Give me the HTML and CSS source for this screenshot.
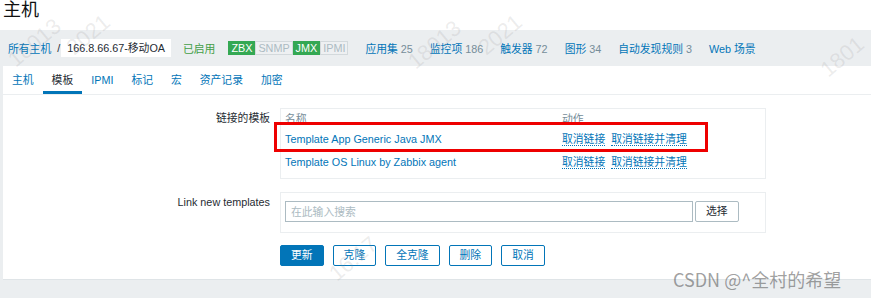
FILE: index.html
```html
<!DOCTYPE html>
<html lang="zh">
<head>
<meta charset="utf-8">
<title>主机</title>
<link rel="stylesheet" href="styles.css">
</head>
<body>
<div class="page-title">主机</div>

<div class="host-bar">
	<a class="link" href="#">所有主机</a><span class="sep">/</span><span class="host-name">166.8.66.67-移动OA</span>
	<span class="status-on">已启用</span>
	<span class="badges">
		<span class="badge on">ZBX</span><span class="badge off">SNMP</span><span class="badge on">JMX</span><span class="badge off">IPMI</span>
	</span>
	<a class="link count" href="#">应用集 <em>25</em></a>
	<a class="link count" href="#">监控项 <em>186</em></a>
	<a class="link count" href="#">触发器 <em>72</em></a>
	<a class="link count" href="#">图形 <em>34</em></a>
	<a class="link count" href="#">自动发现规则 <em>3</em></a>
	<a class="link count" href="#">Web 场景</a>
</div>

<div class="panel">
	<ul class="tabs">
		<li class="tab">主机</li>
		<li class="tab active">模板</li>
		<li class="tab">IPMI</li>
		<li class="tab">标记</li>
		<li class="tab">宏</li>
		<li class="tab">资产记录</li>
		<li class="tab">加密</li>
	</ul>

	<form class="form">
		<div class="form-row">
			<label>链接的模板</label>
			<div class="field-box">
				<table class="linked">
					<tr><th class="col-name">名称</th><th>动作</th></tr>
					<tr>
						<td><a class="link" href="#">Template App Generic Java JMX</a></td>
						<td><a class="action" href="#">取消链接</a><a class="action" href="#">取消链接并清理</a></td>
					</tr>
					<tr>
						<td><a class="link" href="#">Template OS Linux by Zabbix agent</a></td>
						<td><a class="action" href="#">取消链接</a><a class="action" href="#">取消链接并清理</a></td>
					</tr>
				</table>
				<div class="mark"></div>
			</div>
		</div>

		<div class="form-row last">
			<label>Link new templates</label>
			<div class="field-box search">
				<input class="search-input" type="text" placeholder="在此输入搜索">
				<button class="btn" type="button">选择</button>
			</div>
		</div>

		<div class="actions">
			<button class="btn primary" type="button">更新</button>
			<button class="btn alt" type="button">克隆</button>
			<button class="btn alt" type="button">全克隆</button>
			<button class="btn alt" type="button">删除</button>
			<button class="btn alt" type="button">取消</button>
		</div>
	</form>
</div>

<div class="watermarks">
	<span class="wm w1">18013</span>
	<span class="wm w2">2021</span>
	<span class="wm w3">18013</span>
	<span class="wm w4">2021</span>
	<span class="wm w5">1801</span>
	<span class="wm w6">16:17</span>
</div>
<div class="csdn">CSDN @^全村的希望</div>
</body>
</html>
```

FILE: styles.css
```css
body {
	margin:0;
	padding:0;
	background:#ebeef0;
	color:#1f2c33;
	font-family:"Liberation Sans", "Noto Sans CJK SC", sans-serif;
	font-size:10.8px;
	overflow:hidden;}
a {text-decoration:none;}
.link {color:#0275b8;}

.page-title {
	height:30px;
	background:#fff;
	padding-left:3px;
	font-size:18px;
	line-height:21px;
	color:#111;}

.host-bar {
	display:flex;
	align-items:center;
	height:36px;
	padding-left:8px;
	white-space:nowrap;}
.sep {margin:0 1px 0 6px;}
.host-name {
	background:#fff;
	padding:0 6px;
	line-height:18px;}
.status-on {
	margin-left:12px;
	color:#429e47;}
.badges {
	display:flex;
	margin-left:13px;}
.badge {
	padding:0 2px;
	border:1px solid;
	line-height:12px;}
.badge.on {
	background:#34a853;
	border-color:#34a853;
	color:#fff;}
.badge.off {
	background:#eef0f2;
	border-color:#d3d9dc;
	color:#acbbc2;}
.count {margin-left:17px;}
.count:first-of-type {margin-left:15px;}
.count em {
	font-style:normal;
	color:#768d99;}

.panel {
	margin-left:3px;
	height:213px;
	background:#fff;
	border-bottom:1px solid #dfe4e7;}

.tabs {
	display:flex;
	margin:0;
	padding:0;
	list-style:none;
	height:28px;
	border-bottom:1px solid #ebeef0;}
.tab {
	padding:0 9px;
	line-height:28px;
	color:#0275b8;}
.tab.active {
	color:#1f2c33;
	box-shadow:inset 0 -3px #0275b8;}

.form {padding-top:13px;}
.form-row {
	display:grid;
	grid-template-columns:267px 486px;
	column-gap:10px;
	margin-bottom:13px;}
.form-row.last {margin-bottom:12px;}
.form-row label {
	text-align:right;
	line-height:21px;}
.field-box {
	position:relative;
	border:1px solid #ebeef0;
	padding:0 4px 3px;}

.linked {
	border-collapse:collapse;
	white-space:nowrap;}
.linked th {
	font-weight:normal;
	text-align:left;
	color:#768d99;
	padding:0;
	height:20px;
	line-height:20px;}
.linked th.col-name {width:277px;}
.linked td {
	padding:0 0 3px;
	line-height:20px;}
.action {
	color:#0275b8;
	border-bottom:1px dotted #0275b8;
	margin-right:6px;}

.mark {
	position:absolute;
	left:-7px;
	top:13px;
	width:428px;
	height:24px;
	border:3px solid #ee0000;}

.field-box.search {
	display:flex;
	padding:8px 4px 10px;}
.search-input {
	width:408px;
	height:21px;
	box-sizing:border-box;
	margin:0;
	padding:0 5px;
	border:1px solid #acbbc2;
	font:inherit;
	color:#1f2c33;}
.search-input::placeholder {color:#acbbc2;}

.btn {
	height:21px;
	margin:0;
	padding:0 10px;
	border:1px solid #acbbc2;
	border-radius:2px;
	background:#fff;
	color:#1f2c33;
	font:inherit;
	line-height:19px;}
.search .btn {margin-left:2px;}
.actions {
	display:flex;
	gap:9px;
	padding-left:277px;}
.btn.primary {
	background:#0275b8;
	border-color:#0275b8;
	color:#fff;}
.btn.alt {
	border-color:#0275b8;
	color:#0275b8;}

.watermarks {
	position:absolute;
	left:0;
	top:0;
	width:871px;
	height:298px;
	overflow:hidden;
	pointer-events:none;}
.wm {
	position:absolute;
	font-size:22px;
	color:rgba(140,140,140,0.16);
	transform:rotate(-40deg);}
.w1 {left:4px; top:30px;}
.w2 {left:64px; top:22px;}
.w3 {left:404px; top:32px;}
.w4 {left:476px; top:22px;}
.w5 {left:818px; top:44px;}
.w6 {left:326px; top:246px;}

.csdn {
	position:absolute;
	left:673px;
	top:266px;
	font-family:"Noto Sans CJK SC", sans-serif;
	font-size:18px;
	color:rgba(80,80,80,0.55);}
```
